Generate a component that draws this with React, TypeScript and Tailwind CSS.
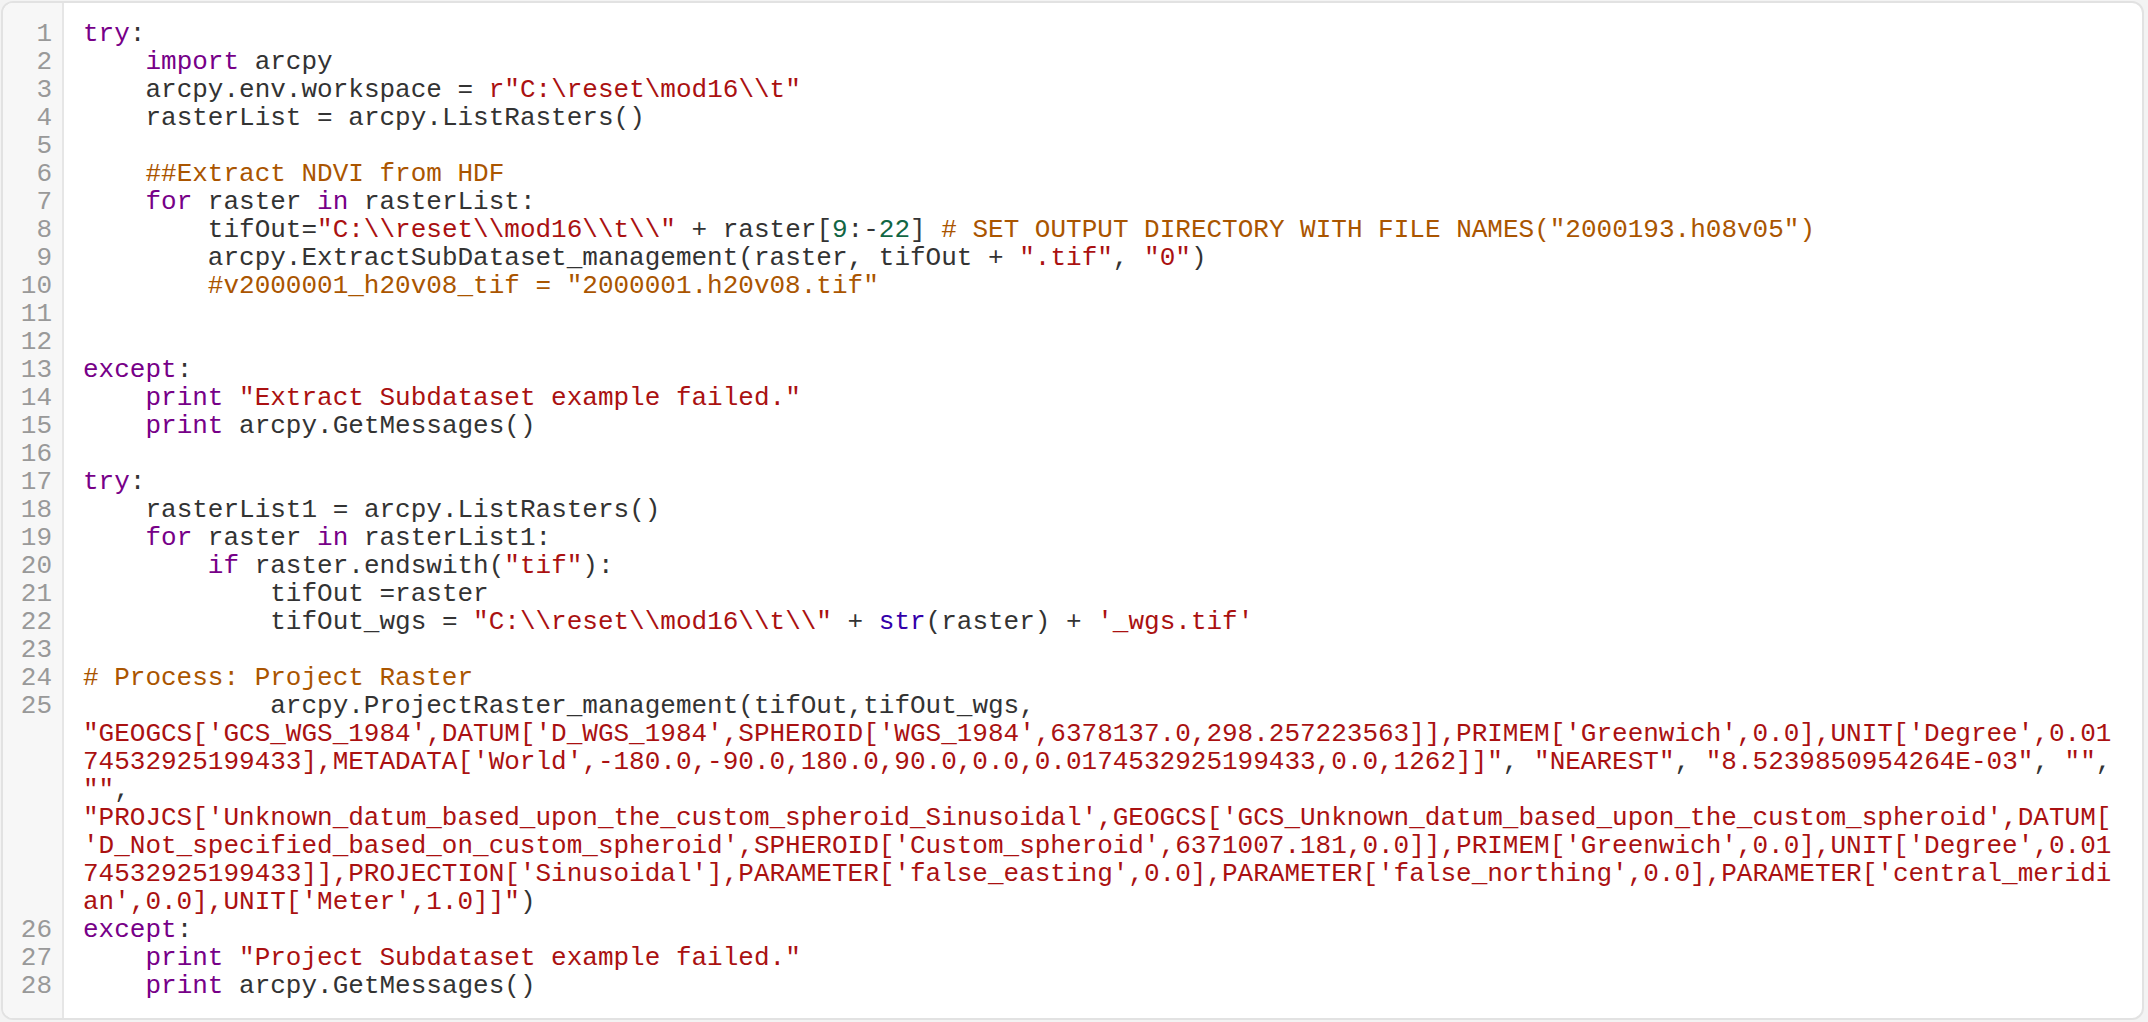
import React from "react";

const CODE = String.raw`try:
    import arcpy
    arcpy.env.workspace = r"C:\reset\mod16\\t"
    rasterList = arcpy.ListRasters()

    ##Extract NDVI from HDF
    for raster in rasterList:
        tifOut="C:\\reset\\mod16\\t\\" + raster[9:-22] # SET OUTPUT DIRECTORY WITH FILE NAMES("2000193.h08v05")
        arcpy.ExtractSubDataset_management(raster, tifOut + ".tif", "0")
        #v2000001_h20v08_tif = "2000001.h20v08.tif"


except:
    print "Extract Subdataset example failed."
    print arcpy.GetMessages()

try:
    rasterList1 = arcpy.ListRasters()
    for raster in rasterList1:
        if raster.endswith("tif"):
            tifOut =raster
            tifOut_wgs = "C:\\reset\\mod16\\t\\" + str(raster) + '_wgs.tif'

# Process: Project Raster
            arcpy.ProjectRaster_management(tifOut,tifOut_wgs, "GEOGCS['GCS_WGS_1984',DATUM['D_WGS_1984',SPHEROID['WGS_1984',6378137.0,298.257223563]],PRIMEM['Greenwich',0.0],UNIT['Degree',0.0174532925199433],METADATA['World',-180.0,-90.0,180.0,90.0,0.0,0.0174532925199433,0.0,1262]]", "NEAREST", "8.5239850954264E-03", "", "", "PROJCS['Unknown_datum_based_upon_the_custom_spheroid_Sinusoidal',GEOGCS['GCS_Unknown_datum_based_upon_the_custom_spheroid',DATUM['D_Not_specified_based_on_custom_spheroid',SPHEROID['Custom_spheroid',6371007.181,0.0]],PRIMEM['Greenwich',0.0],UNIT['Degree',0.0174532925199433]],PROJECTION['Sinusoidal'],PARAMETER['false_easting',0.0],PARAMETER['false_northing',0.0],PARAMETER['central_meridian',0.0],UNIT['Meter',1.0]]")
except:
    print "Project Subdataset example failed."
    print arcpy.GetMessages()`;

const KEYWORDS = new Set(["try", "import", "for", "in", "except", "print", "if"]);
const BUILTINS = new Set(["str"]);

type Tok = { text: string; cls: string };

// tiny python highlighter, codemirror default colours
function tokenize(line: string): Tok[] {
  const re = /(#.*$)|(r?"(?:[^"\\]|\\.)*"|'(?:[^'\\]|\\.)*')|([A-Za-z_]\w*)|(\d+(?:\.\d+)?)|(\s+|.)/g;
  const out: Tok[] = [];
  let m: RegExpExecArray | null;
  while ((m = re.exec(line))) {
    if (m[1]) out.push({ text: m[1], cls: "text-[#aa5500]" });
    else if (m[2]) out.push({ text: m[2], cls: "text-[#aa1111]" });
    else if (m[3]) {
      const w = m[3];
      if (KEYWORDS.has(w)) out.push({ text: w, cls: "text-[#770088]" });
      else if (BUILTINS.has(w)) out.push({ text: w, cls: "text-[#3300aa]" });
      else out.push({ text: w, cls: "" });
    } else if (m[4]) out.push({ text: m[4], cls: "text-[#116644]" });
    else out.push({ text: m[5], cls: "" });
  }
  return out;
}

function GutterCell({ children }: { children?: React.ReactNode }) {
  return (
    <div className="w-[61px] shrink-0 bg-[#f7f7f7] border-r-2 border-[#e6e6e6] pr-[10px] text-right text-[#999999]">
      {children}
    </div>
  );
}

function CodeLine({ n, line }: { n: number; line: string }) {
  return (
    <div className="flex">
      <GutterCell>{n}</GutterCell>
      <div className="w-[2055px] min-h-[28px] pl-[19px] whitespace-pre-wrap [overflow-wrap:break-word] text-[#333333]">
        {tokenize(line).map((t, i) => (
          <span key={i} className={t.cls}>
            {t.text}
          </span>
        ))}
      </div>
    </div>
  );
}

export default function App() {
  const lines = CODE.split("\n");
  return (
    <div className="w-full h-[1022px] bg-[#f3f3f3] pt-px pl-px">
      <div className="w-[2143px] h-[1019px] flex flex-col bg-white border-2 border-[#e2e2e2] rounded-[12px] overflow-hidden font-['Liberation_Mono',monospace] text-[26px] leading-[28px]">
        <div className="flex h-[17px]">
          <GutterCell />
        </div>
        {lines.map((l, i) => (
          <CodeLine key={i} n={i + 1} line={l} />
        ))}
        <div className="flex flex-1">
          <GutterCell />
        </div>
      </div>
    </div>
  );
}
